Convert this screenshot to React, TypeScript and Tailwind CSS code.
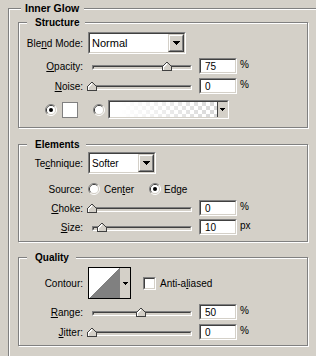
import React from "react";

const sunkOuter =
  "border border-t-[#808080] border-l-[#808080] border-b-white border-r-white";
const sunkInner =
  "border border-t-[#404040] border-l-[#404040] border-b-[#d4d0c8] border-r-[#d4d0c8]";

function Sunken({
  className = "",
  innerClass = "",
  children,
}: {
  className?: string;
  innerClass?: string;
  children?: React.ReactNode;
}) {
  return (
    <div className={`${sunkOuter} ${className}`}>
      <div className={`${sunkInner} w-full h-full ${innerClass}`}>{children}</div>
    </div>
  );
}

function DownArrow({ small = false }: { small?: boolean }) {
  if (small) {
    return (
      <svg width="5" height="3" viewBox="0 0 5 3" shapeRendering="crispEdges">
        <rect x="0" y="0" width="5" height="1" fill="#000" />
        <rect x="1" y="1" width="3" height="1" fill="#000" />
        <rect x="2" y="2" width="1" height="1" fill="#000" />
      </svg>
    );
  }
  return (
    <svg width="7" height="4" viewBox="0 0 7 4" shapeRendering="crispEdges">
      <rect x="0" y="0" width="7" height="1" fill="#000" />
      <rect x="1" y="1" width="5" height="1" fill="#000" />
      <rect x="2" y="2" width="3" height="1" fill="#000" />
      <rect x="3" y="3" width="1" height="1" fill="#000" />
    </svg>
  );
}

function RaisedArrowBtn() {
  return (
    <div className="border border-t-[#d4d0c8] border-l-[#d4d0c8] border-b-[#404040] border-r-[#404040] w-[16px] h-full shrink-0">
      <div className="border border-t-white border-l-white border-b-[#808080] border-r-[#808080] bg-[#d4d0c8] h-full flex items-center justify-center">
        <DownArrow />
      </div>
    </div>
  );
}

function Select({ value, width, textClass }: { value: string; width: string; textClass: string }) {
  return (
    <Sunken className={`${width} h-[22px] ml-[5px] shrink-0`} innerClass="bg-white flex items-stretch">
      <span className={`flex-1 flex items-center pl-[2px] ${textClass}`}>{value}</span>
      <RaisedArrowBtn />
    </Sunken>
  );
}

function Thumb({ left }: { left: number }) {
  return (
    <svg
      width="10"
      height="9"
      viewBox="0 0 10 9"
      className="absolute top-[4px]"
      style={{ left }}
      shapeRendering="crispEdges"
    >
      <path d="M0.5 8.5 V4.5 L4.5 0.5 H5.5 L9.5 4.5 V8.5 Z" fill="#d4d0c8" stroke="#404040" strokeWidth="1" />
      <path d="M1.5 8 V4.9 L4.9 1.5" fill="none" stroke="#ffffff" strokeWidth="1" />
    </svg>
  );
}

function Slider({ pos }: { pos: number }) {
  return (
    <div className="relative ml-[4px] w-[105px] h-[16px] shrink-0">
      <div className={`mt-[7px] ml-[5px] w-[100px] h-[5px] ${sunkOuter}`}>
        <div className={`${sunkInner} h-full bg-[#d4d0c8]`} />
      </div>
      <Thumb left={pos} />
    </div>
  );
}

function NumField({ value }: { value: string }) {
  return (
    <Sunken
      className="w-[38px] h-[16px] ml-[7px] shrink-0"
      innerClass="bg-white flex items-center pl-[4px] text-[10px]"
    >
      {value}
    </Sunken>
  );
}

function Radio({ checked }: { checked?: boolean }) {
  return (
    <svg width="12" height="12" viewBox="0 0 12 12" className="shrink-0">
      <path d="M2.11 9.89 A5.5 5.5 0 0 1 9.89 2.11" fill="none" stroke="#808080" />
      <path d="M9.89 2.11 A5.5 5.5 0 0 1 2.11 9.89" fill="none" stroke="#ffffff" />
      <path d="M2.82 9.18 A4.5 4.5 0 0 1 9.18 2.82" fill="none" stroke="#404040" />
      <path d="M9.18 2.82 A4.5 4.5 0 0 1 2.82 9.18" fill="none" stroke="#d4d0c8" />
      <circle cx="6" cy="6" r="4" fill="#ffffff" />
      {checked && <circle cx="6" cy="6" r="2" fill="#000000" />}
    </svg>
  );
}

function Label({ children }: { children: React.ReactNode }) {
  return <div className="w-[64px] text-right shrink-0 whitespace-nowrap">{children}</div>;
}

function SliderRow({
  label,
  value,
  pos,
  unit,
  className = "",
}: {
  label: React.ReactNode;
  value: string;
  pos: number;
  unit: string;
  className?: string;
}) {
  return (
    <div className={`flex items-center h-[16px] ${className}`}>
      <Label>{label}</Label>
      <Slider pos={pos} />
      <NumField value={value} />
      <span className="ml-[3px] self-start mt-[1px] leading-[12px]">{unit}</span>
    </div>
  );
}

function Group({
  title,
  className = "",
  legendClass = "",
  children,
}: {
  title: string;
  className?: string;
  legendClass?: string;
  children?: React.ReactNode;
}) {
  return (
    <fieldset
      className={`border border-[#808080] shadow-[inset_1px_1px_0_#ffffff,1px_1px_0_#ffffff] ${className}`}
    >
      <legend className={`h-[13px] leading-[13px] font-bold bg-[#d4d0c8] whitespace-nowrap ${legendClass}`}>
        {title}
      </legend>
      {children}
    </fieldset>
  );
}

export default function App() {
  const u = "underline underline-offset-1";
  return (
    <div className="w-[316px] h-[356px] overflow-hidden bg-[#d4d0c8] pt-[2px] font-['Liberation_Sans',Arial,sans-serif] text-[10px] text-black">
      <Group
        title="Inner Glow"
        className="ml-[8px] w-[320px] pb-[30px]"
        legendClass="ml-[12px] pl-[4px] pr-[5px] text-[10.5px]"
      >
        {/* Structure */}
        <Group
          title="Structure"
          className="ml-[9px] mt-[1px] w-[290px] pb-[8px]"
          legendClass="ml-[8px] pl-[8px] pr-[6px]"
        >
          <div className="flex items-center h-[22px] mt-[3px]">
            <Label>
              Ble<span className={u}>n</span>d Mode:
            </Label>
            <Select value="Normal" width="w-[98px]" textClass="text-[11px]" />
          </div>
          <SliderRow
            className="mt-[4px]"
            label={
              <>
                <span className={u}>O</span>pacity:
              </>
            }
            value="75"
            pos={75}
            unit="%"
          />
          <SliderRow
            className="mt-[4px]"
            label={
              <>
                <span className={u}>N</span>oise:
              </>
            }
            value="0"
            pos={0}
            unit="%"
          />
          <div className="flex items-center h-[19px] mt-[6px]">
            <div className="ml-[26px]">
              <Radio checked />
            </div>
            <div className="ml-[5px] w-[16px] h-[16px] border border-[#808080] bg-white shrink-0" />
            <div className="ml-[15px]">
              <Radio />
            </div>
            <div className={`ml-[3px] w-[121px] h-[19px] shrink-0 ${sunkOuter}`}>
              <div className={`${sunkInner} h-full flex`}>
                <div className="flex-1 bg-[conic-gradient(#d0d0d0_25%,#ffffff_0_50%,#d0d0d0_0_75%,#ffffff_0)] bg-[length:8px_8px] bg-size-[8px_8px]">
                  <div className="w-full h-full bg-[linear-gradient(to_right,#ffffff_10%,rgba(255,255,255,0.15))]" />
                </div>
                <div className="w-[10px] border-l border-l-[#404040] bg-[#d4d0c8] flex items-center justify-center">
                  <DownArrow small />
                </div>
              </div>
            </div>
          </div>
        </Group>

        {/* Elements */}
        <Group
          title="Elements"
          className="ml-[9px] mt-[10px] w-[290px] pb-[6px]"
          legendClass="ml-[8px] pl-[8px] pr-[7px]"
        >
          <div className="flex items-center h-[22px] mt-[1px]">
            <Label>
              Te<span className={u}>c</span>hnique:
            </Label>
            <Select value="Softer" width="w-[68px]" textClass="text-[10px]" />
          </div>
          <div className="flex items-center h-[12px] mt-[9px]">
            <Label>Source:</Label>
            <div className="ml-[5px]">
              <Radio />
            </div>
            <span className="ml-[4px]">
              Cen<span className={u}>t</span>er
            </span>
            <div className="ml-[15px]">
              <Radio checked />
            </div>
            <span className="ml-[3px]">
              Ed<span className={u}>g</span>e
            </span>
          </div>
          <SliderRow
            className="mt-[5px]"
            label={
              <>
                <span className={u}>C</span>hoke:
              </>
            }
            value="0"
            pos={0}
            unit="%"
          />
          <SliderRow
            className="mt-[3px]"
            label={
              <>
                <span className={u}>S</span>ize:
              </>
            }
            value="10"
            pos={10}
            unit="px"
          />
        </Group>

        {/* Quality */}
        <Group
          title="Quality"
          className="ml-[9px] mt-[9px] w-[290px] pb-[5px]"
          legendClass="ml-[8px] pl-[8px] pr-[7px]"
        >
          <div className="flex items-center h-[32px] mt-[3px]">
            <Label>Contour:</Label>
            <div className="ml-[5px] w-[43px] h-[32px] border border-black flex shrink-0">
              <svg width="31" height="30" viewBox="0 0 31 30" className="shrink-0" shapeRendering="crispEdges">
                <rect x="0" y="0" width="31" height="30" fill="#ffffff" />
                <polygon points="0,30 31,0 31,30" fill="#808080" />
              </svg>
              <div className="flex-1 bg-[#d4d0c8] flex items-center justify-center">
                <DownArrow small />
              </div>
            </div>
            <Sunken className="ml-[12px] w-[13px] h-[13px] shrink-0" innerClass="bg-white" />
            <span className="ml-[4px]">
              Anti-a<span className={u}>l</span>iased
            </span>
          </div>
          <SliderRow
            className="mt-[5px]"
            label={
              <>
                <span className={u}>R</span>ange:
              </>
            }
            value="50"
            pos={49}
            unit="%"
          />
          <SliderRow
            className="mt-[4px]"
            label={
              <>
                <span className={u}>J</span>itter:
              </>
            }
            value="0"
            pos={0}
            unit="%"
          />
        </Group>
      </Group>
    </div>
  );
}
